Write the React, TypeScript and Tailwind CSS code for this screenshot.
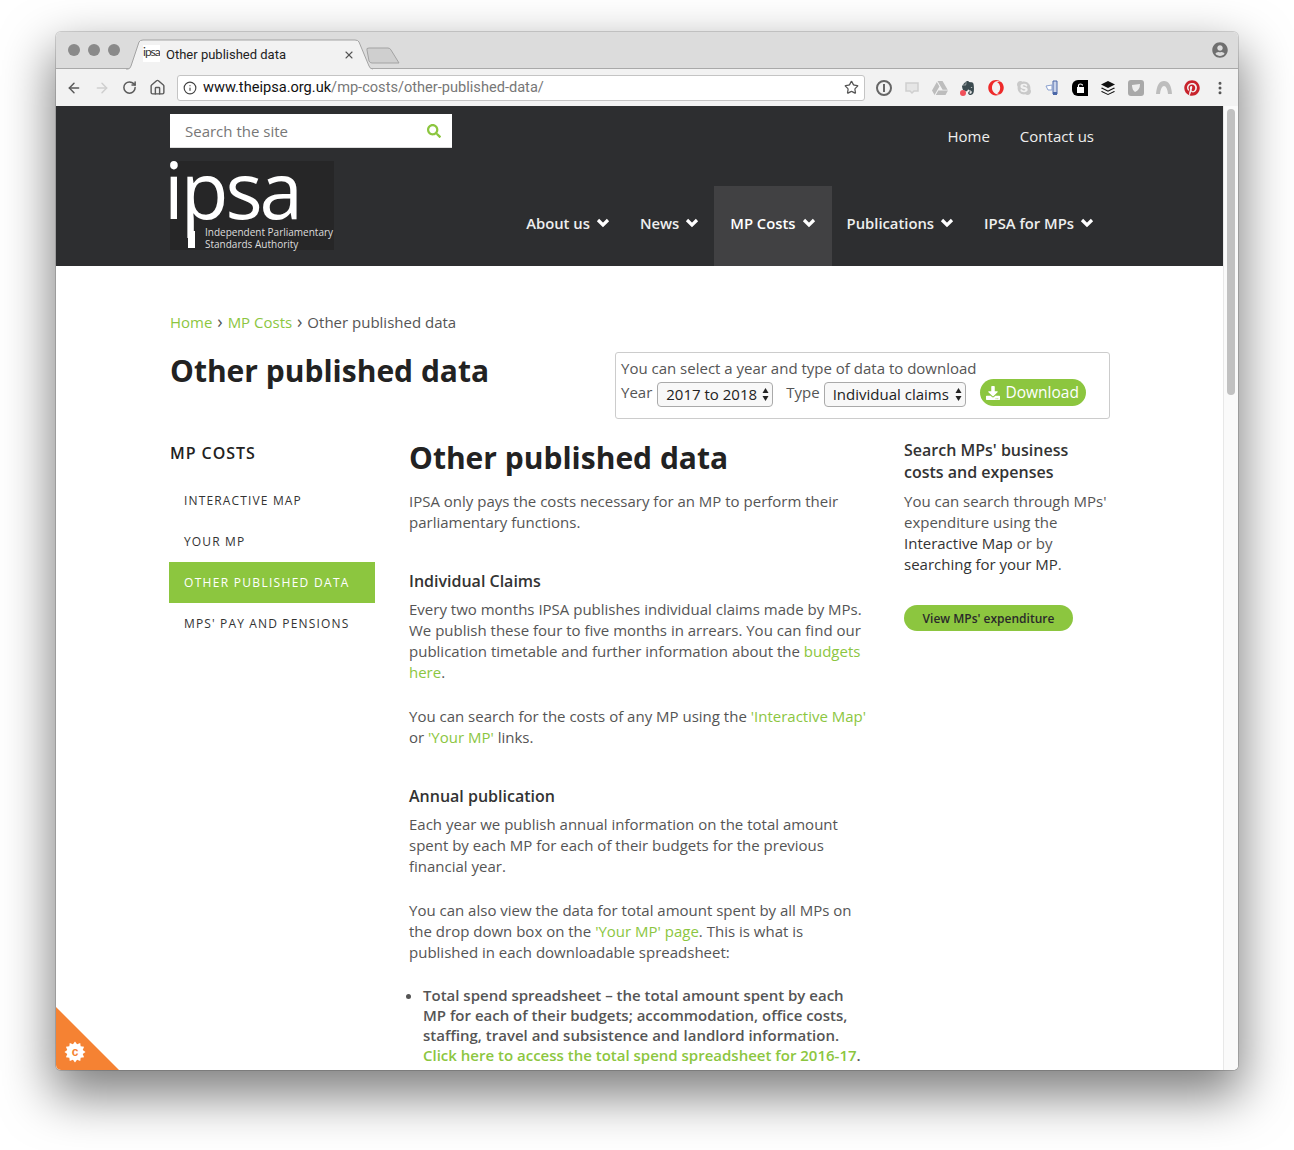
import { ArrowLeft, ArrowRight, RotateCw, Home, Info, Star, X, EllipsisVertical } from "lucide-react";
import { FaSkype, FaPinterest, FaEvernote, FaGoogleDrive, FaOpera, FaUserCircle, FaSearch, FaDownload } from "react-icons/fa";

const GREEN = "text-[#8cc63f]";

const navItems = ["About us", "News", "MP Costs", "Publications", "IPSA for MPs"];
const sideItems = ["INTERACTIVE MAP", "YOUR MP", "OTHER PUBLISHED DATA", "MPS' PAY AND PENSIONS"];

// 12 tooth cookie gear for the corner badge
const gearPoints = Array.from({ length: 24 }, (_, i) => {
  const r = i % 2 === 0 ? 10.5 : 8;
  const a = (i * Math.PI) / 12;
  return `${(19 + r * Math.sin(a)).toFixed(2)},${(45 - r * Math.cos(a)).toFixed(2)}`;
}).join(" ");

const Traffic = () => (
  <div className="flex gap-[8px]">
    <div className="w-[12px] h-[12px] rounded-full bg-[#8a8a8a]"></div>
    <div className="w-[12px] h-[12px] rounded-full bg-[#8a8a8a]"></div>
    <div className="w-[12px] h-[12px] rounded-full bg-[#8a8a8a]"></div>
  </div>
);

const TitleBar = () => (
  <div className="h-[37px] bg-[#dcdcdc] border-b border-[#a9a9a9] flex items-center pl-[12px] pr-[10px] relative shrink-0">
    <Traffic />
    <svg className="absolute left-[70px] top-[7px]" width="280" height="31" viewBox="0 0 280 31">
      <path d="M0 30 H2 Q4 30 5 27 L13 3 Q14 1 17 1 H229 Q232 1 233 3 L243 27 Q244 30 247 30" fill="#f2f2f2" stroke="#a3a3a3" />
      <path d="M241 11 Q240 9 243 9 H262 Q264 9 265 11 L273 24 H246 Q244 24 243 22 Z" fill="#cfcfcf" stroke="#a3a3a3" />
    </svg>
    <div className="absolute left-[87px] top-[13px] w-[17px] h-[17px] bg-white text-[12px] leading-[14px] tracking-[-1px] text-[#333] font-['Lato',sans-serif] overflow-hidden">ipsa</div>
    <div className="absolute left-[110px] top-[14px] text-[13px] leading-[18px] text-[#222] font-['Roboto',sans-serif]">Other published data</div>
    <X className="absolute left-[287px] top-[17px] text-[#555]" size={12} strokeWidth={2.2} />
    <div className="flex-1"></div>
    <FaUserCircle className="text-[#6f6f6f]" size={16} />
  </div>
);

const ExtensionIcons = () => (
  <div className="flex items-center gap-[12px] ml-[11px] pr-[10px]">
    <div className="w-[16px] h-[16px] rounded-full border-2 border-[#666] flex items-center justify-center">
      <div className="w-[2px] h-[8px] bg-[#666]"></div>
    </div>
    <svg width="16" height="16" viewBox="0 0 16 16">
      <path d="M2 3 H14 V11 H10 L8 13 L6 11 H2 Z" fill="#e6e6e6" stroke="#cfcfcf" strokeWidth="1.5" />
    </svg>
    <FaGoogleDrive className="text-[#bdbdbd]" size={16} />
    <div className="relative">
      <FaEvernote className="text-[#3b4a4f]" size={16} />
      <div className="absolute left-0 bottom-0 w-[6px] h-[6px] rounded-full bg-[#f0505a]"></div>
    </div>
    <FaOpera className="text-[#ee2a2a]" size={16} />
    <FaSkype className="text-[#c9c9c9]" size={16} />
    <svg width="16" height="16" viewBox="0 0 16 16">
      <path d="M9 1 H13 V14 H9 Z" fill="#c9d3ea" stroke="#4a67a8" />
      <path d="M2 6 L8 5 V10 H4 Z" fill="#fff" stroke="#8aa0cf" />
      <path d="M9 12 H13 V15 H9 Z" fill="#4a67a8" />
    </svg>
    <div className="w-[16px] h-[16px] bg-black rounded-l-[6px] flex items-center justify-center">
      <svg width="9" height="10" viewBox="0 0 9 10">
        <rect x="1" y="4" width="7" height="6" fill="#fff" />
        <path d="M2.5 4 V2.5 Q2.5 1 4.5 1 Q6.5 1 6.5 2.5" fill="none" stroke="#fff" strokeWidth="1.2" />
      </svg>
    </div>
    <svg width="16" height="16" viewBox="0 0 16 16">
      <path d="M8 1 L15 4.5 L8 8 L1 4.5 Z" fill="#111" />
      <path d="M2 7.5 L8 10.5 L14 7.5 L15 8.2 L8 11.7 L1 8.2 Z" fill="#111" />
      <path d="M2 11 L8 14 L14 11 L15 11.7 L8 15 L1 11.7 Z" fill="#111" />
    </svg>
    <div className="w-[16px] h-[16px] rounded-[3px] bg-[#a9a9a9] flex items-center justify-center">
      <svg width="10" height="10" viewBox="0 0 10 10">
        <path d="M1 2 L9 1 Q9 7 4 9 Q1 7 1 2 Z" fill="#eee" />
      </svg>
    </div>
    <svg width="16" height="16" viewBox="0 0 16 16">
      <path d="M0 14 Q1 1 8 1 Q15 1 16 14 H12 Q11 6 8 6 Q5 6 4 14 Z" fill="#bdbdbd" />
    </svg>
    <FaPinterest className="text-[#c8232c]" size={16} />
    <EllipsisVertical className="text-[#555]" size={16} strokeWidth={2.5} />
  </div>
);

const Toolbar = () => (
  <div className="h-[37px] bg-[#f2f2f2] flex items-center pl-[10px] shrink-0">
    <ArrowLeft className="text-[#5a5a5a]" size={16} strokeWidth={2.2} />
    <ArrowRight className="text-[#cfcfcf] ml-[12px]" size={16} strokeWidth={2.2} />
    <RotateCw className="text-[#5a5a5a] ml-[12px]" size={15} strokeWidth={2.4} />
    <Home className="text-[#5a5a5a] ml-[12px]" size={17} strokeWidth={2} />
    <div className="ml-[11px] w-[688px] h-[26px] bg-white border border-[#c4c4c4] rounded-[3px] flex items-center px-[5px] font-['Roboto',sans-serif] text-[14.6px]">
      <Info className="text-[#444]" size={14} />
      <span className="ml-[6px] text-[#111]">www.theipsa.org.uk</span>
      <span className="text-[#777]">/mp-costs/other-published-data/</span>
      <div className="flex-1"></div>
      <Star className="text-[#555]" size={15} />
    </div>
    <ExtensionIcons />
  </div>
);

const NavChevron = () => (
  <svg width="14" height="10" viewBox="0 0 14 10" className="text-white">
    <path d="M2 2 L7 7 L12 2" fill="none" stroke="currentColor" strokeWidth="3.2" />
  </svg>
);

const Header = () => (
  <div className="h-[160px] bg-[#2d2e30] flex pl-[114px] pr-[129px] shrink-0">
    <div className="w-[282px] pt-[8px]">
      <div className="h-[34px] bg-white border-b border-[#ddd] flex items-center justify-between pl-[15px] pr-[11px] text-[15px] text-[#777]">
        <span className="pt-[1px]">Search the site</span>
        <FaSearch className={GREEN} size={14} />
      </div>
      <div className="relative mt-[13px] w-[164px] h-[89px] bg-[#262627]">
        <div className="absolute left-[-6px] top-[-27px] text-[78px] leading-[110px] tracking-[-3px] text-white">ipsa</div>
        <div className="absolute left-[18px] top-[70px] w-[7px] h-[17px] bg-white"></div>
        <div className="absolute left-[35px] top-[65px] text-[10px] leading-[12px] text-[#ddd] whitespace-nowrap">
          Independent Parliamentary
          <br />
          Standards Authority
        </div>
      </div>
    </div>
    <div className="flex-1 flex flex-col">
      <div className="flex justify-end gap-[30px] pt-[20px] text-[15px] leading-[21px] text-[#eee]">
        <span>Home</span>
        <span>Contact us</span>
      </div>
      <div className="flex-1"></div>
      <div className="flex justify-end h-[80px]">
        {navItems.map((item) => (
          <div
            key={item}
            className={
              item === "MP Costs"
                ? "flex items-center gap-[6px] px-[16px] pb-[6px] bg-[#414143] text-white text-[14.8px] font-semibold"
                : item === "IPSA for MPs"
                  ? "flex items-center gap-[6px] pl-[15px] pb-[6px] text-[#eee] text-[14.8px] font-semibold"
                  : "flex items-center gap-[6px] px-[15px] pb-[6px] text-[#eee] text-[14.8px] font-semibold"
            }
          >
            <span>{item}</span>
            <NavChevron />
          </div>
        ))}
      </div>
    </div>
  </div>
);

const SelectArrows = () => (
  <svg width="7" height="15" viewBox="0 0 7 15" className="text-[#222]">
    <path d="M3.5 1 L6.5 6 H0.5 Z" fill="currentColor" />
    <path d="M3.5 14 L6.5 9 H0.5 Z" fill="currentColor" />
  </svg>
);

const DownloadBox = () => (
  <div className="w-[495px] h-[67px] border border-[#ccc] rounded-[3px] px-[5px] pt-[5px] text-[#555] text-[15px] leading-[21px]">
    <div>You can select a year and type of data to download</div>
    <div className="flex items-start">
      <span className="mt-[3px]">Year</span>
      <div className="ml-[5px] mt-[3px] w-[116px] h-[25px] border border-[#aaa] rounded-[4px] bg-[#f8f8f8] flex items-center justify-between pl-[8px] pr-[3px] text-[#222]">
        <span>2017 to 2018</span>
        <SelectArrows />
      </div>
      <span className="ml-[13px] mt-[3px]">Type</span>
      <div className="ml-[4px] mt-[3px] w-[142px] h-[25px] border border-[#aaa] rounded-[4px] bg-[#f8f8f8] flex items-center justify-between pl-[8px] pr-[3px] text-[#222]">
        <span>Individual claims</span>
        <SelectArrows />
      </div>
      <div className="ml-[14px] w-[106px] h-[27px] rounded-full bg-[#8cc63f] text-white flex items-center justify-center gap-[5px] text-[15.5px]">
        <FaDownload size={14} />
        <span>Download</span>
      </div>
    </div>
  </div>
);

const Sidebar = () => (
  <div className="w-[206px] shrink-0">
    <div className="pt-[3px] pb-[15px] text-[16px] leading-[24px] tracking-[0.95px] text-[#222] font-semibold pl-[1px]">MP COSTS</div>
    {sideItems.map((item) => (
      <div
        key={item}
        className={
          item === "OTHER PUBLISHED DATA"
            ? "h-[41px] flex items-center pl-[15px] text-[12px] tracking-[1.3px] bg-[#8cc63f] text-white font-medium"
            : "h-[41px] flex items-center pl-[15px] text-[12px] tracking-[1.15px] text-[#333]"
        }
      >
        {item}
      </div>
    ))}
  </div>
);

const Article = () => (
  <div className="w-[459px] ml-[34px] shrink-0 text-[15px] leading-[21px] text-[#555]">
    <h2 className="text-[30px] leading-[40px] font-bold text-[#222]">Other published data</h2>
    <p className="mt-[13px]">IPSA only pays the costs necessary for an MP to perform their parliamentary functions.</p>
    <h3 className="mt-[36px] text-[16px] leading-[24px] font-semibold text-[#333]">Individual Claims</h3>
    <p className="mt-[6px]">
      Every two months IPSA publishes individual claims made by MPs. We publish these four to five months in arrears. You can find our publication timetable and further information about the <span className={GREEN}>budgets here</span>.
    </p>
    <p className="mt-[23px]">
      You can search for the costs of any MP using the <span className={GREEN}>'Interactive Map'</span> or <span className={GREEN}>'Your MP'</span> links.
    </p>
    <h3 className="mt-[36px] text-[16px] leading-[24px] font-semibold text-[#333]">Annual publication</h3>
    <p className="mt-[6px]">Each year we publish annual information on the total amount spent by each MP for each of their budgets for the previous financial year.</p>
    <p className="mt-[23px]">
      You can also view the data for total amount spent by all MPs on the drop down box on the <span className={GREEN}>'Your MP' page</span>. This is what is published in each downloadable spreadsheet:
    </p>
    <ul className="mt-[22px] list-disc pl-[14px] font-semibold leading-[20px]">
      <li>
        Total spend spreadsheet – the total amount spent by each MP for each of their budgets; accommodation, office costs, staffing, travel and subsistence and landlord information. <span className={GREEN}>Click here to access the total spend spreadsheet for 2016-17</span>.
      </li>
    </ul>
  </div>
);

const Aside = () => (
  <div className="w-[206px] ml-[36px] mt-[1px] shrink-0 text-[15px] leading-[21px] text-[#555]">
    <h3 className="text-[16px] leading-[22px] font-semibold text-[#333]">Search MPs' business costs and expenses</h3>
    <p className="mt-[8px]">
      You can search through MPs' expenditure using the <span className="text-[#333]">Interactive Map</span> or by <span className="text-[#333]">searching for your MP</span>.
    </p>
    <div className="mt-[30px] w-[169px] h-[26px] rounded-full bg-[#8cc63f] flex items-center justify-center text-[12px] font-semibold text-[#2a2a2a]">View MPs' expenditure</div>
  </div>
);

const Scrollbar = () => (
  <div className="w-[15px] h-full bg-[#fafafa] border-l border-[#e8e8e8] pt-[3px] pl-[3px] shrink-0">
    <div className="w-[8px] h-[286px] rounded-full bg-[#c1c1c1]"></div>
  </div>
);

const Badge = () => (
  <div className="absolute left-0 bottom-0 leading-[0]">
    <svg width="63" height="63" viewBox="0 0 63 63">
      <path d="M0 0 L63 63 H0 Z" fill="#f58233" />
      <polygon points={gearPoints} fill="#fff" />
      <text x="19" y="49" textAnchor="middle" fontSize="12" fontWeight="bold" fill="#f58233" fontFamily="'Liberation Sans', sans-serif">c</text>
    </svg>
  </div>
);

export default function App() {
  return (
    <div className="w-[1294px] h-[1150px] bg-white pt-[32px] pl-[56px] overflow-hidden font-['Open_Sans',sans-serif]">
      <div className="w-[1182px] h-[1038px] rounded-[5px] overflow-hidden flex flex-col shadow-[0_0_0_1px_rgba(0,0,0,0.15),0_22px_50px_4px_rgba(0,0,0,0.5)]">
        <TitleBar />
        <Toolbar />
        <div className="flex-1 flex min-h-0 bg-white">
          <div className="flex-1 min-w-0 relative overflow-hidden">
            <Header />
            <div className="pl-[113px] pr-[113px]">
              <div className="pt-[45px] text-[15px] leading-[21px] text-[#555] pl-[1px]">
                <span className={GREEN}>Home</span> <span className="mx-[1px] text-[18px] leading-[21px]">›</span> <span className={GREEN}>MP Costs</span> <span className="mx-[1px] text-[18px] leading-[21px]">›</span> Other published data
              </div>
              <div className="flex justify-between items-start mt-[19px] pl-[1px]">
                <h1 className="-mt-[1px] text-[30px] leading-[40px] font-bold text-[#222]">Other published data</h1>
                <DownloadBox />
              </div>
              <div className="flex mt-[19px]">
                <Sidebar />
                <Article />
                <Aside />
              </div>
            </div>
            <Badge />
          </div>
          <Scrollbar />
        </div>
      </div>
    </div>
  );
}
